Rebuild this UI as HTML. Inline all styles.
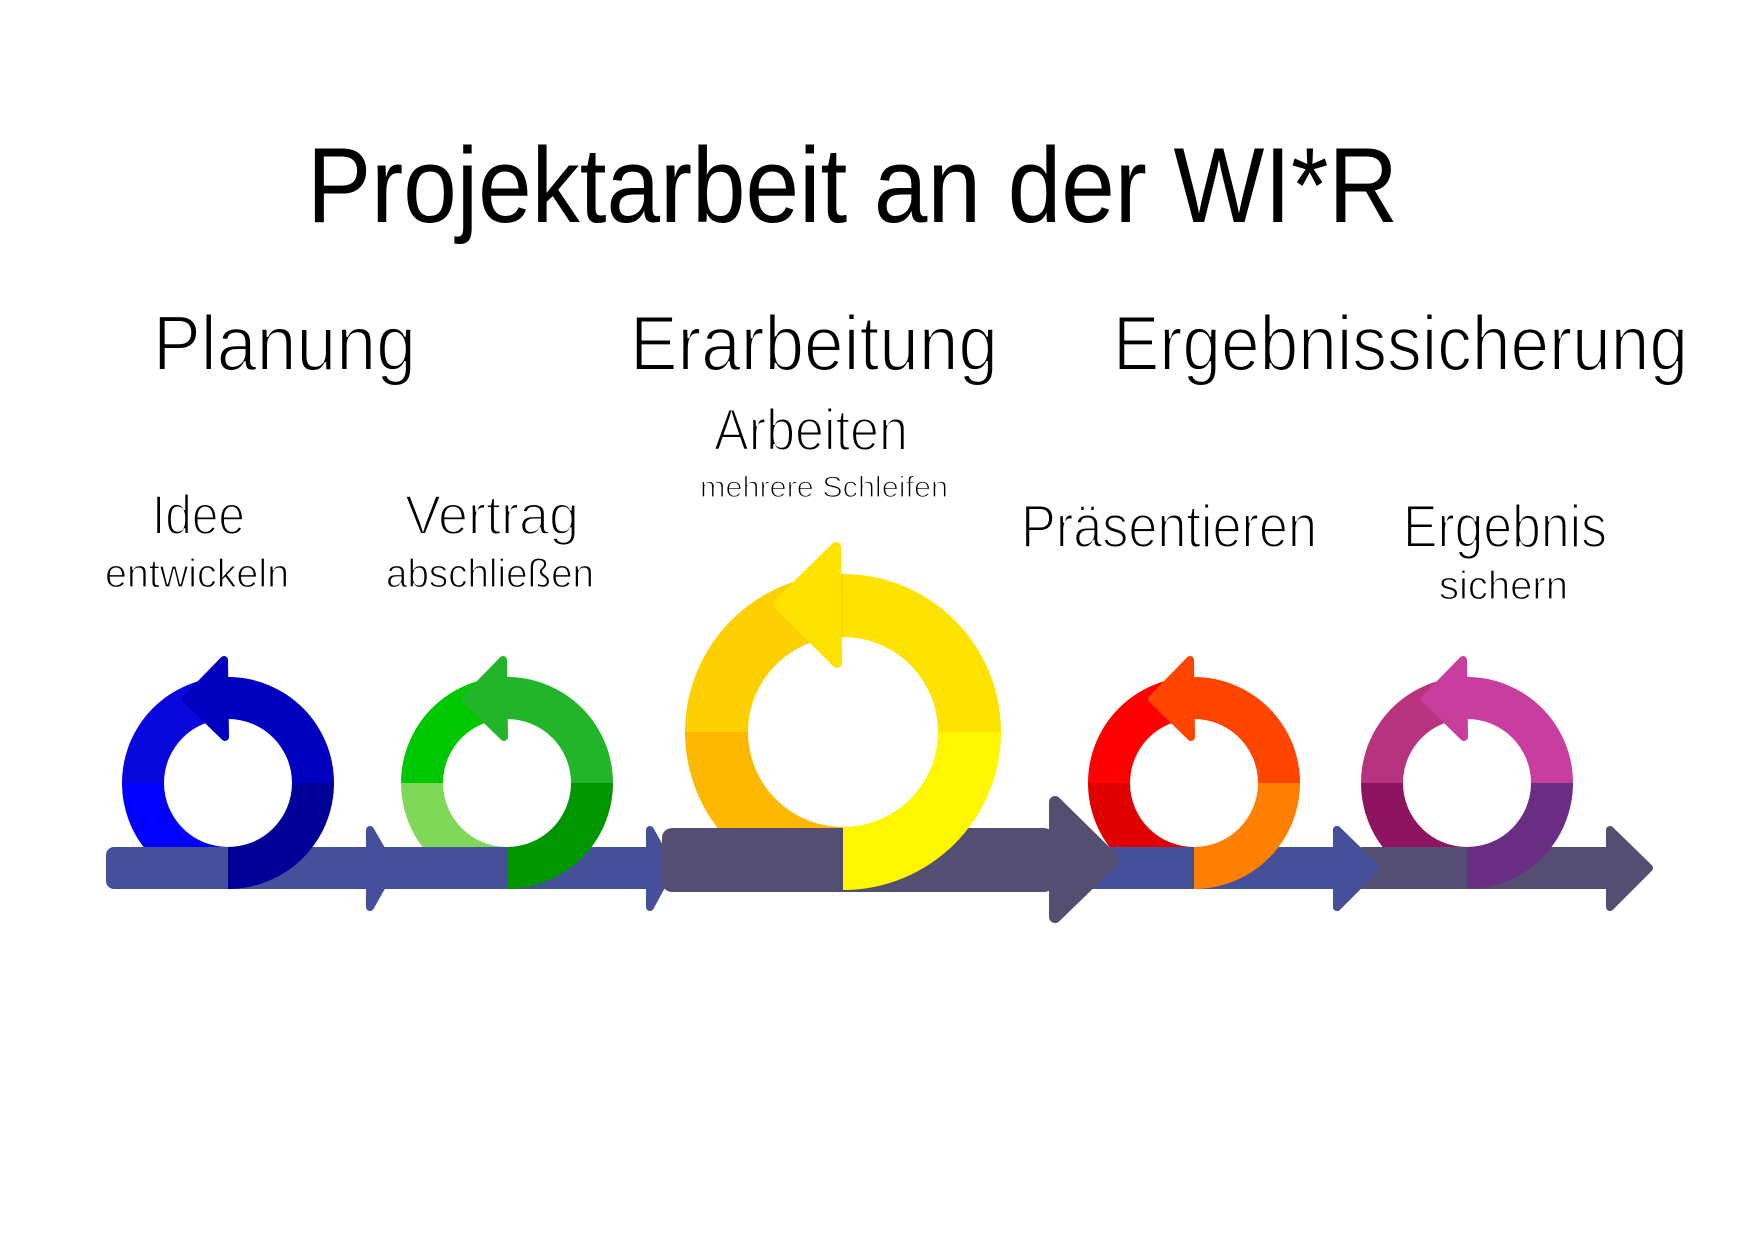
<!DOCTYPE html>
<html><head><meta charset="utf-8"><style>
html,body{margin:0;padding:0;background:#fff;}
svg{display:block;}
text{font-family:"Liberation Sans",sans-serif;fill:#000;}
.t{stroke:#fff;stroke-width:2;}
.s{stroke:#fff;stroke-width:1.2;}
</style></head><body>
<svg width="1754" height="1240" viewBox="0 0 1754 1240" xmlns="http://www.w3.org/2000/svg">
<rect width="1754" height="1240" fill="#fff"/>
<!-- Texts -->
<text x="307" y="222" font-size="107" textLength="1091" lengthAdjust="spacingAndGlyphs">Projektarbeit an der WI*R</text>
<text class="t" x="153" y="370" font-size="78" textLength="263" lengthAdjust="spacingAndGlyphs">Planung</text>
<text class="t" x="630" y="370" font-size="78" textLength="368" lengthAdjust="spacingAndGlyphs">Erarbeitung</text>
<text class="t" x="1113" y="370" font-size="78" textLength="575" lengthAdjust="spacingAndGlyphs">Ergebnissicherung</text>
<text class="t" x="714" y="450" font-size="58" textLength="194" lengthAdjust="spacingAndGlyphs">Arbeiten</text>
<text class="s" x="700" y="497" font-size="30" textLength="248" lengthAdjust="spacingAndGlyphs">mehrere Schleifen</text>
<text class="t" x="152" y="534" font-size="56" textLength="93" lengthAdjust="spacingAndGlyphs">Idee</text>
<text class="s" x="105" y="587" font-size="40" textLength="184" lengthAdjust="spacingAndGlyphs">entwickeln</text>
<text class="t" x="405" y="534" font-size="56" textLength="174" lengthAdjust="spacingAndGlyphs">Vertrag</text>
<text class="s" x="386" y="587" font-size="40" textLength="208" lengthAdjust="spacingAndGlyphs">abschließen</text>
<text class="t" x="1021" y="547" font-size="60" textLength="296" lengthAdjust="spacingAndGlyphs">Präsentieren</text>
<text class="t" x="1403" y="547" font-size="60" textLength="204" lengthAdjust="spacingAndGlyphs">Ergebnis</text>
<text class="s" x="1439" y="599" font-size="40" textLength="129" lengthAdjust="spacingAndGlyphs">sichern</text>

<!-- BL quadrants (under bars) -->
<path d="M228,889 A106,106 0 0 1 122,783 L164,783 A64,64 0 0 0 228,847 Z" fill="#0000ff"/>
<path d="M507,889 A106,106 0 0 1 401,783 L443,783 A64,64 0 0 0 507,847 Z" fill="#80d858"/>
<path d="M843,890 A158,158 0 0 1 685,732 L748,732 A95,95 0 0 0 843,827 Z" fill="#ffb800"/>
<path d="M1194,889 A106,106 0 0 1 1088,783 L1130,783 A64,64 0 0 0 1194,847 Z" fill="#e00000"/>
<path d="M1467,889 A106,106 0 0 1 1361,783 L1403,783 A64,64 0 0 0 1467,847 Z" fill="#8e1462"/>

<!-- Bars -->
<g stroke-linejoin="round">
<rect x="106" y="847" width="270" height="42" rx="8" fill="#46509a"/>
<polygon points="370,830 392,868 370,907" fill="#46509a" stroke="#46509a" stroke-width="8"/>
<rect x="380" y="847" width="270" height="42" fill="#46509a"/>
<polygon points="650,830 671,868 650,907" fill="#46509a" stroke="#46509a" stroke-width="8"/>
<rect x="1090" y="847" width="247" height="42" fill="#46509a"/>
<polygon points="1337,830 1376,868 1337,907" fill="#46509a" stroke="#46509a" stroke-width="8"/>
<rect x="1362" y="847" width="248" height="42" fill="#544f72"/>
<polygon points="1610,830 1649,868 1610,907" fill="#544f72" stroke="#544f72" stroke-width="8"/>
<rect x="1361" y="847" width="18" height="42" fill="#544f72"/>
<polygon points="1337,830 1376,868 1337,907" fill="#46509a" stroke="#46509a" stroke-width="8"/>
</g>

<!-- Rings -->
<path d="M122,783 A106,106 0 0 1 228,677 L228,719 A64,64 0 0 0 164,783 Z" fill="#0808dd"/>
<path d="M228,677 A106,106 0 0 1 334,783 L292,783 A64,64 0 0 0 228,719 Z" fill="#0000c0"/>
<path d="M334,783 A106,106 0 0 1 228,889 L228,847 A64,64 0 0 0 292,783 Z" fill="#000099"/>
<polygon points="224,660 225,737 186,699" fill="#0000c0" stroke="#0000c0" stroke-width="8" stroke-linejoin="round"/>
<path d="M401,783 A106,106 0 0 1 507,677 L507,719 A64,64 0 0 0 443,783 Z" fill="#00c800"/>
<path d="M507,677 A106,106 0 0 1 613,783 L571,783 A64,64 0 0 0 507,719 Z" fill="#22b52a"/>
<path d="M613,783 A106,106 0 0 1 507,889 L507,847 A64,64 0 0 0 571,783 Z" fill="#009600"/>
<polygon points="503,660 504,737 465,699" fill="#22b52a" stroke="#22b52a" stroke-width="8" stroke-linejoin="round"/>
<rect x="662" y="828" width="392" height="64" rx="10" fill="#544f72"/>
<path d="M685,732 A158,158 0 0 1 843,574 L843,637 A95,95 0 0 0 748,732 Z" fill="#ffd000"/>
<path d="M843,574 A158,158 0 0 1 1001,732 L938,732 A95,95 0 0 0 843,637 Z" fill="#ffe300"/>
<path d="M1001,732 A158,158 0 0 1 843,890 L843,827 A95,95 0 0 0 938,732 Z" fill="#fff700"/>
<polygon points="836,547 837,663 778,604" fill="#ffe300" stroke="#ffe300" stroke-width="10" stroke-linejoin="round"/>
<path d="M1088,783 A106,106 0 0 1 1194,677 L1194,719 A64,64 0 0 0 1130,783 Z" fill="#ff0000"/>
<path d="M1194,677 A106,106 0 0 1 1300,783 L1258,783 A64,64 0 0 0 1194,719 Z" fill="#ff4500"/>
<path d="M1300,783 A106,106 0 0 1 1194,889 L1194,847 A64,64 0 0 0 1258,783 Z" fill="#ff8000"/>
<polygon points="1190,660 1191,737 1152,699" fill="#ff4500" stroke="#ff4500" stroke-width="8" stroke-linejoin="round"/>
<polygon points="1055,802 1114,860 1055,917" fill="#544f72" stroke="#544f72" stroke-width="12" stroke-linejoin="round"/>
<path d="M1361,783 A106,106 0 0 1 1467,677 L1467,719 A64,64 0 0 0 1403,783 Z" fill="#b7337f"/>
<path d="M1467,677 A106,106 0 0 1 1573,783 L1531,783 A64,64 0 0 0 1467,719 Z" fill="#c73e9f"/>
<path d="M1573,783 A106,106 0 0 1 1467,889 L1467,847 A64,64 0 0 0 1531,783 Z" fill="#6a2d84"/>
<polygon points="1463,660 1464,737 1425,699" fill="#c73e9f" stroke="#c73e9f" stroke-width="8" stroke-linejoin="round"/>
</svg>
</body></html>
